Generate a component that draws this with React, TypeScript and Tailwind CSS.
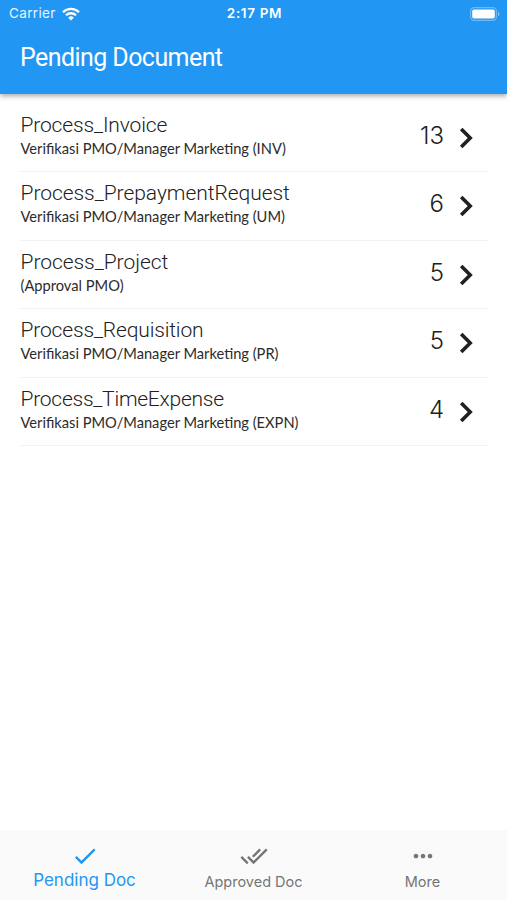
import React, { useState } from 'react';
import { MdCheck, MdDoneAll, MdMoreHoriz } from 'react-icons/md';

interface PendingDocument {
    name: string;
    step: string;
    count: number;
    tracking: string;
}

const documents: PendingDocument[] = [
    { name: 'Process_Invoice', step: 'Verifikasi PMO/Manager Marketing (INV)', count: 13, tracking: 'tracking-[-0.15px]' },
    { name: 'Process_PrepaymentRequest', step: 'Verifikasi PMO/Manager Marketing (UM)', count: 6, tracking: 'tracking-[-0.05px]' },
    { name: 'Process_Project', step: '(Approval PMO)', count: 5, tracking: 'tracking-[-0.05px]' },
    { name: 'Process_Requisition', step: 'Verifikasi PMO/Manager Marketing (PR)', count: 5, tracking: 'tracking-[-0.16px]' },
    { name: 'Process_TimeExpense', step: 'Verifikasi PMO/Manager Marketing (EXPN)', count: 4, tracking: 'tracking-[-0.25px]' },
];

const tabs = [
    { label: 'Pending Doc', icon: MdCheck },
    { label: 'Approved Doc', icon: MdDoneAll },
    { label: 'More', icon: MdMoreHoriz },
];

const StatusBar: React.FC = () => (
    <div className="grid h-[27px] grid-cols-3 items-center pl-[9px] pr-[7px] font-['Inter',sans-serif] text-[13.5px] leading-none">
        <div className="flex items-center gap-[6px] text-white/90">
            <span className="tracking-[0.35px]">Carrier</span>
            <svg width="18" height="14" viewBox="0 0 18 14" fill="none" stroke="white" strokeWidth="2.3">
                <path d="M1 5.2a11.4 11.4 0 0 1 16 0" />
                <path d="M4 8.3a7.1 7.1 0 0 1 10 0" />
                <path d="M9 13.6 6.2 10.7a4 4 0 0 1 5.6 0Z" fill="white" stroke="none" />
            </svg>
        </div>
        <span className="pt-[1px] text-center font-semibold tracking-[0.65px] text-white">2:17 PM</span>
        <svg className="justify-self-end" width="30" height="14" viewBox="0 0 30 14">
            <rect x="0.6" y="0.6" width="25.8" height="12.8" rx="3.6" fill="none" stroke="white" strokeOpacity="0.35" strokeWidth="1.2" />
            <rect x="2.2" y="2.4" width="22.6" height="9.2" rx="1.8" fill="white" />
            <path d="M28 4.8v4.4a2.4 2.4 0 0 0 0-4.4Z" fill="white" fillOpacity="0.45" />
        </svg>
    </div>
);

const DocumentRow: React.FC<{ doc: PendingDocument }> = ({ doc }) => (
    <li className="flex h-[68.4px] items-start border-b border-[#f2f2f2] text-[#212121]">
        <div className="flex-1 pl-[0.5px] pt-[9px]">
            <h2 className={`font-['Roboto',sans-serif] text-[21px] font-light leading-[24px] ${doc.tracking}`}>{doc.name}</h2>
            <p className="pt-[1px] font-['Lato',sans-serif] text-[14.67px] leading-[22px] text-[#2b2b2b]">{doc.step}</p>
        </div>
        <span className="pt-[17px] font-['Inter',sans-serif] text-[24px] font-light leading-[30px]">{doc.count}</span>
        <svg className="ml-[15px] mr-[13px] mt-[23px]" width="16" height="22" viewBox="0 0 16 22" fill="none" stroke="#212121" strokeWidth="3.6">
            <path d="M2.2 2 11.2 11 2.2 20" />
        </svg>
    </li>
);

const App: React.FC = () => {
    const [activeTab, setActiveTab] = useState('Pending Doc');

    return (
        <div className="flex h-[900px] w-[507px] flex-col overflow-hidden bg-white">
            <header className="z-10 h-[94px] shrink-0 bg-[#2196f3] text-white shadow-[0_2px_5px_rgba(0,0,0,0.35)]">
                <StatusBar />
                <h1 className="pl-[20px] pt-[15px] font-['Roboto',sans-serif] text-[25px] leading-[32px] tracking-[-0.57px]">Pending Document</h1>
            </header>
            <ul className="flex-1 pl-[20px] pr-[19px] pt-[10px]">
                {documents.map(doc => (
                    <DocumentRow key={doc.name} doc={doc} />
                ))}
            </ul>
            <nav className="grid h-[70px] shrink-0 grid-cols-3 bg-[#fafafa] font-['Inter',sans-serif]">
                {tabs.map(tab => {
                    const isActive = tab.label === activeTab;
                    return (
                        <button
                            key={tab.label}
                            onClick={() => setActiveTab(tab.label)}
                            className={`flex flex-col items-center pt-[12px] ${isActive ? 'text-[#2196f3]' : 'text-[#757575]'}`}
                        >
                            <tab.icon className="size-[28px]" />
                            <span className={isActive ? 'text-[17px] leading-[21px]' : 'text-[14.5px] leading-[23px]'}>{tab.label}</span>
                        </button>
                    );
                })}
            </nav>
        </div>
    );
};

export default App;
